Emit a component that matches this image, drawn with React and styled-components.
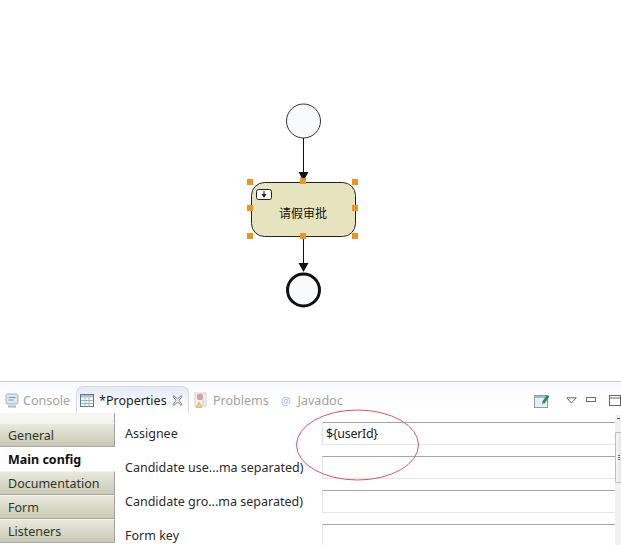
import React from "react"
import styled, { createGlobalStyle } from "styled-components"

const Global = createGlobalStyle`
  html, body { margin: 0; padding: 0; background: #fff; }
  body { font-family: "Noto Sans", "Liberation Sans", sans-serif; }
  svg { flex: none; }
`

const Page = styled.div`
  width: 621px;
  height: 545px;
  display: flex;
  flex-direction: column;
  overflow: hidden;
  position: relative;
  background: #fff;
`

const Canvas = styled.div`
  height: 381px;
  flex: none;
`

const Diagram = styled.svg`
  display: block;
  width: 621px;
  height: 381px;
`

const Panel = styled.div`
  flex: 1;
  display: flex;
  flex-direction: column;
  min-height: 0;
  border-top: 1px solid #c6d0e4;
`

const TabStrip = styled.div`
  height: 31px;
  flex: none;
  display: flex;
  align-items: flex-end;
  padding-left: 5px;
  background: linear-gradient(#f6f8fc, #fdfdfe 40%, #fff);
  position: relative;
`

const Tab = styled.div`
  height: ${p => (p.$active ? "27px" : "26px")};
  margin-left: ${p => p.$ml || 0}px;
  display: flex;
  align-items: center;
  gap: ${p => p.$gap || 5}px;
  padding: ${p => (p.$active ? "1px 6px 0 3px" : "0")};
  font-size: 12.5px;
  color: ${p => (p.$active ? "#1d1d1d" : "#a3a3a3")};
  white-space: nowrap;
  box-sizing: border-box;
  ${p => p.$active && `
    width: 113px;
    border: 1px solid #d4dae6;
    border-bottom: none;
    border-radius: 7px 7px 0 0;
    background: linear-gradient(#e3e8f2, #f7f8fb 55%, #fff);
  `}
`

const AtSign = styled.span`
  color: #9cc0dc;
  font-size: 11px;
`

const ViewTools = styled.div`
  margin-left: auto;
  height: 26px;
  display: flex;
  align-items: center;
  width: 87px;
  flex: none;
`

const ToolSlot = styled.div`
  width: ${p => p.$w}px;
  flex: none;
  display: flex;
`

const Body = styled.div`
  flex: 1;
  min-height: 0;
  display: flex;
`

const Sidebar = styled.div`
  width: 115px;
  flex: none;
  display: flex;
  flex-direction: column;
`

const SideSpacer = styled.div`
  height: 10px;
  flex: none;
  background: #f5f5f2;
  border-right: 1px solid #a0a0a0;
  width: 114px;
`

const SideItem = styled.div`
  height: 24px;
  flex: none;
  box-sizing: border-box;
  display: flex;
  align-items: center;
  padding-left: 8px;
  font-size: 12.5px;
  width: 115px;
  ${p => p.$selected ? `
    background: #fff;
    color: #111;
    font-weight: 700;
  ` : `
    color: #33362c;
    background: linear-gradient(#e9e9de, #d6d7c4 55%, #c9cab6);
    border-top: 1px solid #f4f4ee;
    border-bottom: 1px solid #a9a99c;
    border-right: 1px solid #a0a0a0;
  `}
`

const Form = styled.div`
  flex: 1;
  min-width: 0;
  padding: 9px 0 0 10px;
  overflow: hidden;
`

const Row = styled.div`
  display: grid;
  grid-template-columns: 197px 1fr;
  height: 34px;
  align-items: start;
`

const Label = styled.div`
  font-size: 12.5px;
  color: #2b2b2b;
  line-height: 23px;
  white-space: nowrap;
`

const Field = styled.input`
  display: block;
  width: 100%;
  height: 23px;
  box-sizing: border-box;
  border: 1px solid #e6e6e6;
  border-top-color: #a6a6a6;
  border-right: none;
  outline: none;
  padding: 0 3px;
  font: 12.5px "Noto Sans", "Liberation Sans", sans-serif;
  letter-spacing: -0.3px;
  color: #222;
  background: #fff;
`

const Scrollbar = styled.div`
  width: 6px;
  flex: none;
  margin-top: 2px;
  background: #f1f1f1;
  display: flex;
  flex-direction: column;
  align-items: center;
  padding-top: 3px;
`

const ScrollArrow = styled.div`
  width: 3px;
  height: 1px;
  background: #555;
  margin-bottom: 13px;
`

const Thumb = styled.div`
  width: 6px;
  height: 51px;
  display: flex;
  flex-direction: column;
  justify-content: center;
  align-items: center;
  gap: 1px;
  background: linear-gradient(90deg, #f8f8f8, #e4e4e4);
  border: 1px solid #bdbdbd;
  border-right: none;
  border-radius: 2px 0 0 2px;
  box-sizing: border-box;
`

const Grip = styled.div`
  width: 2px;
  height: 1px;
  background: #666;
`

const Annotation = styled.svg`
  position: absolute;
  left: 292px;
  top: 405px;
  width: 132px;
  height: 80px;
  pointer-events: none;
`

const ConsoleIcon = () => (
  <svg width="14" height="15" viewBox="0 0 14 15">
    <rect x="1" y="1" width="12" height="10" rx="2" fill="#dfe6ef" stroke="#9fb0c4" />
    <path d="M3.5 4.5h7M3.5 7h5" stroke="#8093aa" />
    <path d="M3 13.5h8" stroke="#a9b7c8" strokeWidth="2" />
  </svg>
)

const TableIcon = () => (
  <svg width="14" height="13" viewBox="0 0 14 13">
    <rect x=".5" y=".5" width="13" height="12" fill="#fff" stroke="#5f7a96" />
    <rect x="1" y="1" width="12" height="2.5" fill="#a9c0d8" />
    <path d="M1 6.5h12M1 9.5h12M5 3.5v9M9 3.5v9" stroke="#9eb2c7" />
  </svg>
)

const CloseIcon = () => (
  <svg width="11" height="11" viewBox="0 0 11 11">
    <path d="M1 1.500 2 .8 5.500 4 9 .8l1 .7L7 5.500l3 4-1 .8-3.500-3.300L2 10.300l-1-.8 3-4z" fill="#fff" stroke="#6e6e6e" strokeWidth=".9" />
  </svg>
)

const ProblemsIcon = () => (
  <svg width="15" height="16" viewBox="0 0 15 16">
    <rect x="2" y="1" width="11" height="13" fill="#f3f0f0" stroke="#c9d3de" />
    <rect x="4" y="2" width="6" height="6" rx="2" fill="#dc9a9e" />
    <path d="M3 15.500 6 10l3 5.500z" fill="#efd27a" stroke="#c9a94f" strokeWidth=".6" />
    <path d="M10 5v9" stroke="#c4cfda" />
  </svg>
)

const NewWindowIcon = () => (
  <svg width="16" height="15" viewBox="0 0 16 15">
    <rect x=".5" y="2.500" width="13" height="12" fill="#e3f0fb" stroke="#8c9cab" />
    <rect x="1" y="3" width="12" height="2" fill="#a8b8c8" />
    <path d="M8 9l5-7 2.500 1.500-5 7z" fill="#2f8c50" />
    <path d="M8 9v2.500l2.200-1z" fill="#8aa08f" />
  </svg>
)

const ViewMenuIcon = () => (
  <svg width="11" height="7" viewBox="0 0 11 7">
    <path d="M.8.800h9.400L5.500 6z" fill="#fff" stroke="#666" />
  </svg>
)

const MinimizeIcon = () => (
  <svg width="11" height="6" viewBox="0 0 11 6">
    <rect x=".5" y=".5" width="9" height="4" fill="#fff" stroke="#6b6b6b" />
  </svg>
)

const MaximizeIcon = () => (
  <svg width="12" height="11" viewBox="0 0 12 11">
    <rect x=".5" y=".5" width="11" height="10" fill="#fff" stroke="#666" />
    <path d="M1 3h10" stroke="#666" />
  </svg>
)

const handles = [
  [250, 182], [303, 181], [355, 182],
  [250, 208], [355, 208],
  [250, 236], [303, 236], [355, 236],
]

const sections = [
  { name: "General" },
  { name: "Main config", selected: true },
  { name: "Documentation" },
  { name: "Form" },
  { name: "Listeners" },
]

const fields = [
  { label: "Assignee", value: "${userId}" },
  { label: "Candidate use...ma separated)", value: "" },
  { label: "Candidate gro...ma separated)", value: "" },
  { label: "Form key", value: "" },
]

const App = () => (
  <Page>
    <Global />
    <Canvas>
      <Diagram viewBox="0 0 621 381">
        <circle cx="303.500" cy="121" r="17" fill="#f8f9fb" stroke="#333" strokeWidth="1" />
        <path d="M303.500 138V174" stroke="#111" strokeWidth="1" />
        <path d="M298.500 172h10l-5 9z" fill="#111" />
        <rect x="251.500" y="182.500" width="104" height="54" rx="13" fill="#e6e4bf" stroke="#222" />
        <rect x="256.500" y="189.500" width="15" height="10" rx="2" fill="#fff" stroke="#222" />
        <path d="M264 191v3" stroke="#222" />
        <path d="M261.500 194h5L264 198z" fill="#222" />
        <text x="303" y="218" textAnchor="middle" fontSize="12" fill="#111" fontFamily='"Noto Sans CJK SC", sans-serif'>请假审批</text>
        <path d="M303.500 237V265" stroke="#111" strokeWidth="1" />
        <path d="M298.500 263h10l-5 9z" fill="#111" />
        <circle cx="303.500" cy="290" r="16" fill="#f8f9fb" stroke="#111" strokeWidth="3" />
        {handles.map(([x, y]) => (
          <rect key={`${x}-${y}`} x={x - 3} y={y - 3} width="6" height="6" fill="#f0921e" />
        ))}
      </Diagram>
    </Canvas>
    <Panel>
      <TabStrip>
        <Tab $gap={4}><ConsoleIcon />Console</Tab>
        <Tab $active $ml={6}>
          <TableIcon />*Properties<CloseIcon />
        </Tab>
        <Tab $ml={4}><ProblemsIcon />Problems</Tab>
        <Tab $ml={12} $gap={7}><AtSign>@</AtSign>Javadoc</Tab>
        <ViewTools>
          <ToolSlot $w={32}><NewWindowIcon /></ToolSlot>
          <ToolSlot $w={20}><ViewMenuIcon /></ToolSlot>
          <ToolSlot $w={23}><MinimizeIcon /></ToolSlot>
          <ToolSlot $w={12}><MaximizeIcon /></ToolSlot>
        </ViewTools>
      </TabStrip>
      <Body>
        <Sidebar>
          <SideSpacer />
          {sections.map(s => (
            <SideItem key={s.name} $selected={s.selected}>{s.name}</SideItem>
          ))}
        </Sidebar>
        <Form>
          {fields.map(f => (
            <Row key={f.label}>
              <Label>{f.label}</Label>
              <Field readOnly value={f.value} />
            </Row>
          ))}
        </Form>
        <Scrollbar>
          <ScrollArrow />
          <Thumb>
            <Grip />
            <Grip />
            <Grip />
          </Thumb>
        </Scrollbar>
      </Body>
    </Panel>
    <Annotation viewBox="0 0 132 80">
      <ellipse cx="65.500" cy="40" rx="61" ry="35" fill="none" stroke="#d95563" strokeWidth="1" />
    </Annotation>
  </Page>
)

export default App
